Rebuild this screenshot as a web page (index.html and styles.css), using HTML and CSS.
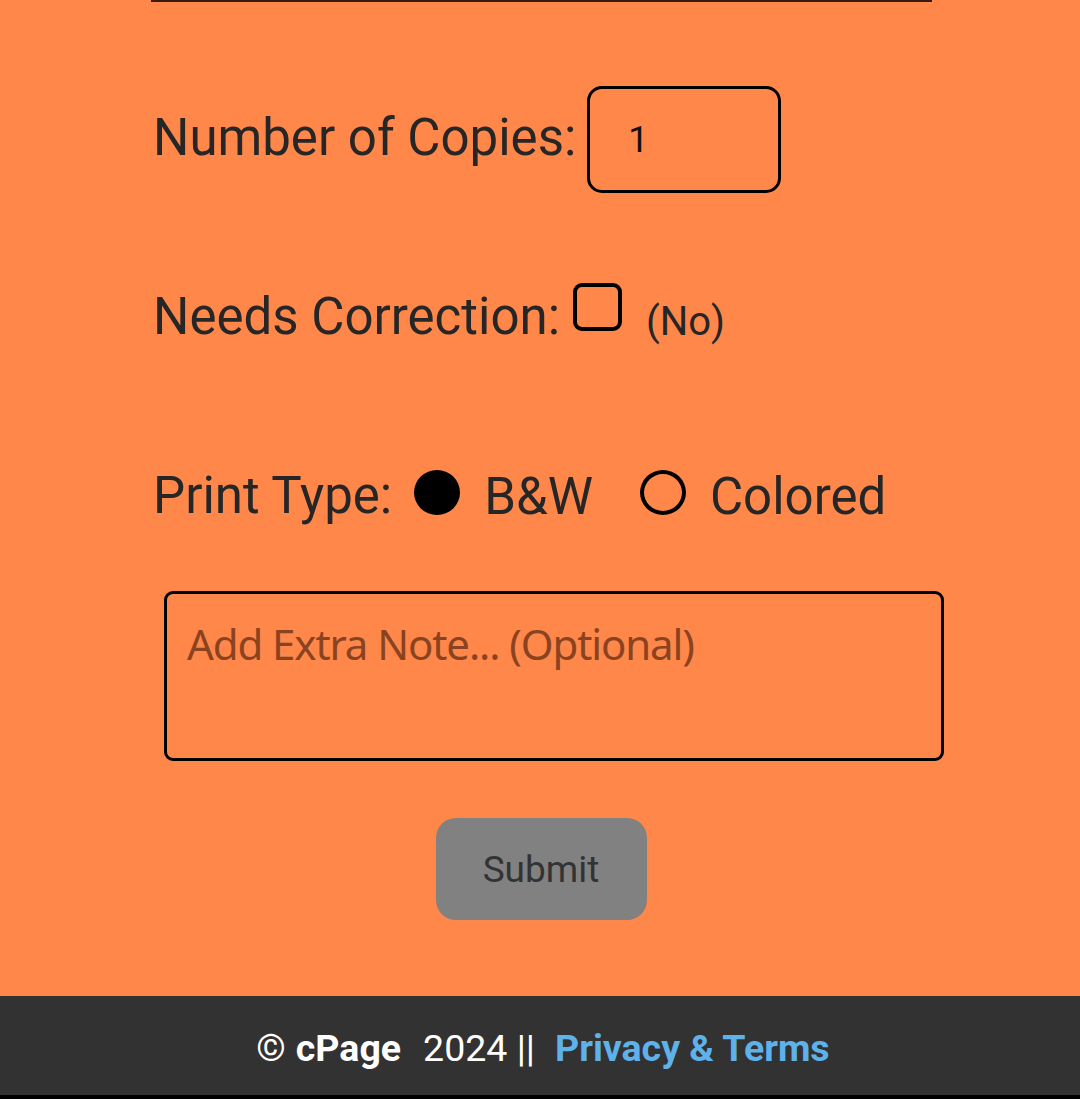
FILE: index.html
```html
<!DOCTYPE html>
<html>
<head>
<meta charset="utf-8">
<link rel="stylesheet" href="styles.css">
</head>
<body>
<main class="page">
  <div class="form">
    <div class="rule"></div>
    <div class="row row-copies">
      <span class="label">Number of Copies:</span>
      <div class="num-input">1</div>
    </div>
    <div class="row row-correction">
      <span class="label">Needs Correction:</span>
      <span class="checkbox"></span>
      <span class="no">(No)</span>
    </div>
    <div class="row row-type">
      <span class="label">Print Type:</span>
      <span class="radio radio-on"></span>
      <span class="opt">B&amp;W</span>
      <span class="radio radio-off"></span>
      <span class="opt">Colored</span>
    </div>
    <div class="note">
      <span class="placeholder">Add Extra Note... (Optional)</span>
    </div>
  </div>
  <div class="submit-wrap">
    <button class="submit">Submit</button>
  </div>
</main>
<footer class="footer">
  <span class="copy">©</span>
  <b class="brand">cPage</b>
  <span class="year">2024 ||</span>
  <b class="link">Privacy &amp; Terms</b>
</footer>
<div class="bottom-bar"></div>
</body>
</html>
```
FILE: styles.css
```css
html, body {
  margin: 0;
  padding: 0;
}
body {
  background: #ff874a;
  font-family: Roboto, "Liberation Sans", sans-serif;
  color: #262626;
  width: 1080px;
  height: 1099px;
  overflow: hidden;
}
.page {
  height: 996px;
}
.form {
  padding-left: 151px;
  width: 792px;
}
.rule {
  width: 781px;
  height: 2px;
  background: #3a1a0a;
}
.row {
  display: flex;
  align-items: center;
}
.label {
  font-size: 51px;
  line-height: 60px;
  padding-left: 2px;
}
.row-copies {
  margin-top: 84px;
  height: 107px;
}
.row-copies .label {
  position: relative;
  top: -2px;
}
.num-input {
  margin-left: 11px;
  width: 194px;
  height: 107px;
  border: 3px solid #000;
  border-radius: 15px;
  box-sizing: border-box;
  font-size: 36px;
  color: #111;
  display: flex;
  align-items: center;
  padding-left: 38px;
}
.row-correction {
  margin-top: 92px;
  height: 60px;
}
.row-correction .label {
  position: relative;
  top: 2px;
}
.checkbox {
  width: 49px;
  height: 48px;
  border: 4px solid #000;
  border-radius: 9px;
  box-sizing: border-box;
  margin-left: 13px;
  align-self: flex-start;
  margin-top: -2px;
}
.no {
  font-size: 40px;
  margin-left: 24px;
  position: relative;
  top: 6px;
}
.row-type {
  margin-top: 121px;
  height: 60px;
}
.radio {
  width: 46px;
  height: 45px;
  border-radius: 50%;
  box-sizing: border-box;
  margin-top: -8px;
}
.radio-on {
  background: #000;
  margin-left: 22px;
}
.radio-off {
  border: 4px solid #000;
  margin-left: 47px;
}
.opt {
  font-size: 51px;
  margin-left: 24px;
}
.note {
  margin-top: 65px;
  margin-left: 13px;
  width: 780px;
  height: 170px;
  border: 3px solid #000;
  border-radius: 9px;
  box-sizing: border-box;
  padding: 21px 0 0 20px;
}
.placeholder {
  font-family: "Noto Sans", "Open Sans", sans-serif;
  font-size: 42px;
  color: #8a4320;
  letter-spacing: -1.1px;
}
.submit-wrap {
  display: flex;
  justify-content: center;
  margin-top: 57px;
  padding-left: 2px;
}
.submit {
  width: 211px;
  height: 102px;
  background: #818181;
  border: none;
  border-radius: 20px;
  font-family: Roboto, sans-serif;
  font-size: 37px;
  color: #333;
}
.footer {
  height: 99px;
  background: #323232;
  display: flex;
  align-items: center;
  justify-content: center;
  font-size: 37.5px;
  color: #fff;
  padding-left: 6px;
  padding-top: 4px;
  box-sizing: border-box;
}
.copy {
  margin-right: 10px;
}
.brand {
  font-weight: 700;
  margin-right: 22px;
}
.year {
  margin-right: 20px;
}
.link {
  color: #5fb1ea;
  font-weight: 700;
}
.bottom-bar {
  height: 4px;
  background: #000;
}
```
